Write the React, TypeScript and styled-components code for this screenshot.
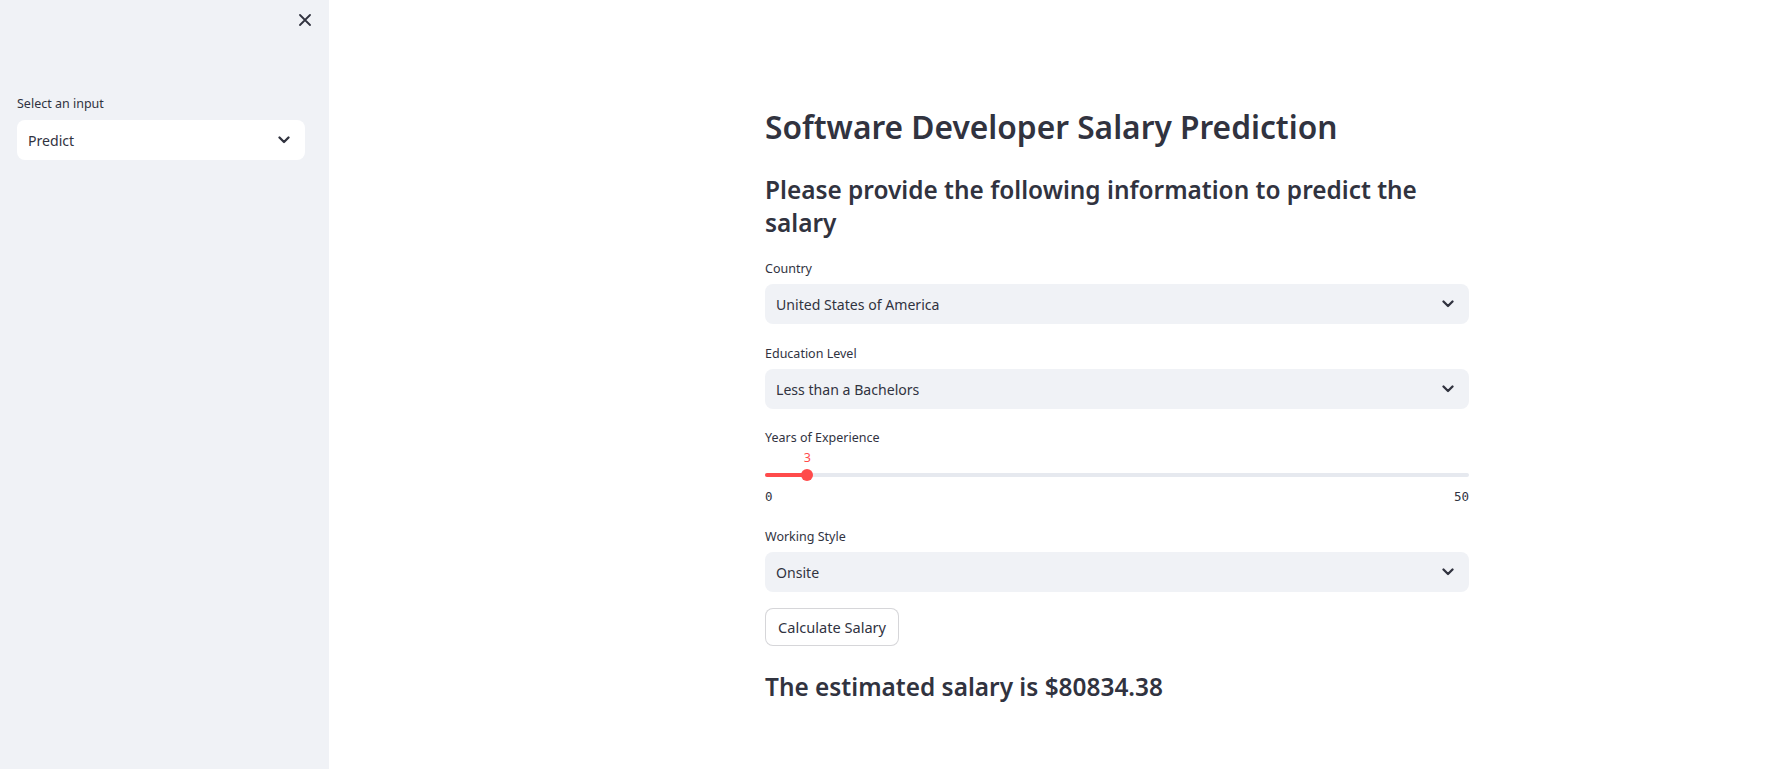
import React from "react";
import styled, { createGlobalStyle } from "styled-components";

const GlobalStyle = createGlobalStyle`
  html, body { margin: 0; padding: 0; background: #ffffff; }
  body {
    font-family: "Noto Sans", "Liberation Sans", sans-serif;
    color: #31333f;
    -webkit-font-smoothing: antialiased;
  }
  * { box-sizing: border-box; }
`;

const TEXT = "#31333f";
const RED = "#ff4b4b";

const Shell = styled.div`
  display: flex;
  height: 100vh;
  width: 100%;
  overflow: hidden;
`;

const Sidebar = styled.aside`
  width: 329px;
  flex: 0 0 329px;
  background: #f0f2f6;
  display: flex;
  flex-direction: column;
`;

const SidebarTop = styled.div`
  height: 40px;
  display: flex;
  align-items: center;
  justify-content: flex-end;
  padding-right: 10px;
`;

const CloseButton = styled.button`
  width: 28px;
  height: 28px;
  border: none;
  background: transparent;
  padding: 0;
  display: flex;
  align-items: center;
  justify-content: center;
  color: ${TEXT};
  cursor: pointer;
`;

const SidebarContent = styled.div`
  padding: 56px 24px 0 17px;
`;

const Main = styled.main`
  flex: 1;
  background: #ffffff;
  overflow: hidden;
`;

const Block = styled.div`
  width: 704px;
  margin-left: 436px;
  padding-top: 107px;
  display: flex;
  flex-direction: column;
`;

const Title = styled.h1`
  margin: 0;
  font-size: 31.7px;
  line-height: 40px;
  font-weight: 600;
  color: ${TEXT};
`;

const Subheader = styled.h2<{ $gap: number }>`
  margin: ${(p) => p.$gap}px 0 0;
  font-size: 24.4px;
  line-height: 33px;
  font-weight: 600;
  color: ${TEXT};
`;

const Field = styled.div<{ $gap: number }>`
  margin-top: ${(p) => p.$gap}px;
  display: flex;
  flex-direction: column;
`;

const Label = styled.label<{ $after?: number }>`
  font-size: 12.5px;
  line-height: 16px;
  height: 16px;
  margin-bottom: ${(p) => p.$after ?? 7}px;
  color: ${TEXT};
`;

const SelectBox = styled.div<{ $tone: "white" | "gray" }>`
  height: 40px;
  border-radius: 8px;
  background: ${(p) => (p.$tone === "white" ? "#ffffff" : "#f0f2f6")};
  display: flex;
  align-items: center;
  justify-content: space-between;
  padding: 0 15px 0 11px;
  cursor: pointer;
`;

const SelectValue = styled.span`
  font-size: 14.1px;
  color: ${TEXT};
`;

const SliderArea = styled.div`
  padding-top: 20px;
`;

const Track = styled.div`
  position: relative;
  height: 4px;
  border-radius: 2px;
  background: #e6e9ef;
`;

const Fill = styled.div`
  position: absolute;
  left: 0;
  top: 0;
  bottom: 0;
  border-radius: 2px;
  background: ${RED};
`;

const Thumb = styled.div`
  position: absolute;
  top: 50%;
  width: 12px;
  height: 12px;
  border-radius: 50%;
  background: ${RED};
  transform: translate(-50%, -50%);
`;

const ThumbValue = styled.div`
  position: absolute;
  top: -23px;
  transform: translateX(-50%);
  font-size: 12.5px;
  line-height: 16px;
  color: ${RED};
`;

const TickRow = styled.div`
  margin-top: 12px;
  display: flex;
  justify-content: space-between;
  font-family: "DejaVu Sans Mono", "Liberation Mono", monospace;
  font-size: 12.5px;
  line-height: 16px;
  color: ${TEXT};
`;

const Button = styled.button`
  margin-top: 16px;
  align-self: flex-start;
  height: 38px;
  padding: 0 12px;
  border: 1px solid rgba(49, 51, 63, 0.2);
  border-radius: 8px;
  background: #ffffff;
  font-family: "Noto Sans", "Liberation Sans", sans-serif;
  font-size: 14.6px;
  color: ${TEXT};
  cursor: pointer;
`;

const Chevron = () => (
  <svg width="12" height="8" viewBox="0 0 12 8" aria-hidden="true">
    <polyline
      points="1.5,1.5 6,6 10.5,1.5"
      fill="none"
      stroke={TEXT}
      strokeWidth="2.3"
      strokeLinecap="round"
      strokeLinejoin="round"
    />
  </svg>
);

const CloseIcon = () => (
  <svg width="12" height="12" viewBox="0 0 12 12" aria-hidden="true">
    <path d="M1 1 L11 11 M11 1 L1 11" stroke={TEXT} strokeWidth="1.8" strokeLinecap="round" />
  </svg>
);

const Select = ({ value, tone }: { value: string; tone: "white" | "gray" }) => (
  <SelectBox $tone={tone}>
    <SelectValue>{value}</SelectValue>
    <Chevron />
  </SelectBox>
);

const Slider = ({ value, min, max }: { value: number; min: number; max: number }) => {
  const pct = ((value - min) / (max - min)) * 100;
  return (
    <SliderArea>
      <Track>
        <Fill style={{ width: `${pct}%` }} />
        <Thumb style={{ left: `${pct}%` }} />
        <ThumbValue style={{ left: `${pct}%` }}>{value}</ThumbValue>
      </Track>
      <TickRow>
        <span>{min}</span>
        <span>{max}</span>
      </TickRow>
    </SliderArea>
  );
};

export default function App() {
  return (
    <>
      <GlobalStyle />
      <Shell>
        <Sidebar>
          <SidebarTop>
            <CloseButton aria-label="Close sidebar">
              <CloseIcon />
            </CloseButton>
          </SidebarTop>
          <SidebarContent>
            <Field $gap={0}>
              <Label $after={8}>Select an input</Label>
              <Select value="Predict" tone="white" />
            </Field>
          </SidebarContent>
        </Sidebar>
        <Main>
          <Block>
            <Title>Software Developer Salary Prediction</Title>
            <Subheader $gap={26}>
              Please provide the following information to predict the salary
            </Subheader>
            <Field $gap={22}>
              <Label>Country</Label>
              <Select value="United States of America" tone="gray" />
            </Field>
            <Field $gap={22}>
              <Label>Education Level</Label>
              <Select value="Less than a Bachelors" tone="gray" />
            </Field>
            <Field $gap={21}>
              <Label>Years of Experience</Label>
              <Slider value={3} min={0} max={50} />
            </Field>
            <Field $gap={24}>
              <Label>Working Style</Label>
              <Select value="Onsite" tone="gray" />
            </Field>
            <Button>Calculate Salary</Button>
            <Subheader $gap={24}>The estimated salary is $80834.38</Subheader>
          </Block>
        </Main>
      </Shell>
    </>
  );
}
